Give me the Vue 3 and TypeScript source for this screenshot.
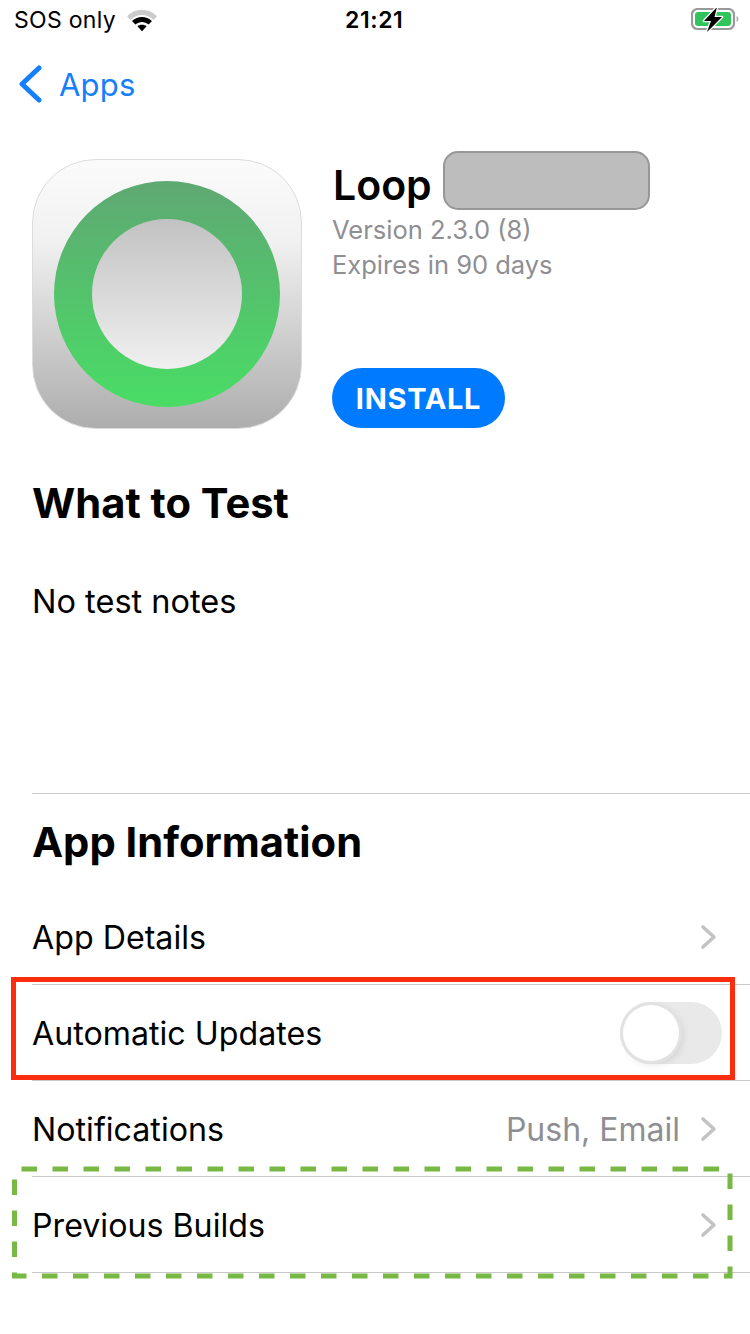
<script setup lang="ts">
interface Row {
  label: string
  value?: string
  toggle?: boolean
}
const rows: Row[] = [
  { label: 'App Details' },
  { label: 'Automatic Updates', toggle: true },
  { label: 'Notifications', value: 'Push, Email' },
  { label: 'Previous Builds' },
]
</script>

<template>
  <div class="page">
    <header class="status">
      <div class="status-left">
        <span class="sos">SOS only</span>
        <svg class="wifi" width="30" height="24" viewBox="0 0 30 24">
          <path d="M0 8.2C8.2 -0.4 21.8 -0.4 30 8.2L26.4 12C19.8 5.4 10.2 5.4 3.6 12Z" fill="#cbcbcb" />
          <path d="M5 13C10.8 7.8 19.2 7.8 25 13L21.6 16.6C17.6 13.2 12.4 13.2 8.4 16.6Z" fill="#000" />
          <path d="M10.4 18.2C13 16.2 17 16.2 19.6 18.2L15 23.2Z" fill="#000" />
        </svg>
      </div>
      <span class="time">21:21</span>
      <svg class="battery" width="48" height="24" viewBox="0 0 48 24">
        <rect x="1" y="1" width="42" height="20" rx="5.5" fill="none" stroke="#9a9a9a" stroke-width="2.2" />
        <rect x="4" y="4" width="36" height="14" rx="3" fill="#30c45a" />
        <path d="M45.5 8C47 8.6 47.5 9.6 47.5 11S47 13.4 45.5 14Z" fill="#b5b5b5" />
        <path d="M26 -1L13 13H20L16 24L31 9H23.5Z" fill="#000" stroke="#fff" stroke-width="2.6" stroke-linejoin="round" paint-order="stroke" />
      </svg>
    </header>

    <nav class="nav">
      <svg class="back" width="26" height="38" viewBox="0 0 26 38">
        <path d="M22 3L5 19L22 35" fill="none" stroke="#147efb" stroke-width="5" stroke-linecap="round" stroke-linejoin="round" />
      </svg>
      <span class="nav-label">Apps</span>
    </nav>

    <section class="hero">
      <div class="app-icon">
        <div class="ring">
          <div class="hole"></div>
        </div>
      </div>
      <div class="meta">
        <div class="name-line">
          <span class="name">Loop</span>
          <span class="redact"></span>
        </div>
        <div class="sub">Version 2.3.0 (8)</div>
        <div class="sub">Expires in 90 days</div>
        <button class="install" type="button">INSTALL</button>
      </div>
    </section>

    <h2 class="title test-title">What to Test</h2>
    <p class="notes">No test notes</p>

    <section class="info">
      <h2 class="title info-title">App Information</h2>
      <ul class="rows">
        <li v-for="row in rows" :key="row.label" class="row">
          <span class="label">{{ row.label }}</span>
          <span v-if="row.value" class="value">{{ row.value }}</span>
          <span v-if="row.toggle" class="toggle"><span class="knob"></span></span>
          <svg v-else class="chev" width="18" height="26" viewBox="0 0 18 26">
            <path d="M3 3L14 13L3 23" fill="none" stroke="#c3c3c6" stroke-width="3.6" stroke-linecap="round" stroke-linejoin="round" />
          </svg>
        </li>
      </ul>
    </section>

    <div class="mark-red"></div>
    <svg class="mark-green" width="726" height="116" viewBox="0 0 726 116">
      <rect x="4.5" y="4" width="715.5" height="107" fill="none" stroke="#77b944" stroke-width="5" stroke-dasharray="15.5 15.5" stroke-dashoffset="-7" />
    </svg>
  </div>
</template>

<style>
html,
body {
  margin: 0;
  background: #fff;
}
</style>

<style scoped>
.page {
  position: relative;
  width: 750px;
  height: 1334px;
  overflow: hidden;
  background: #fff;
  color: #000;
  font-family: Inter, "Liberation Sans", sans-serif;
}
.status {
  position: relative;
  display: flex;
  align-items: center;
  justify-content: space-between;
  height: 40px;
  padding: 0 11px 0 14px;
}
.status-left {
  display: flex;
  align-items: center;
  gap: 11px;
}
.sos {
  font-size: 23px;
  letter-spacing: 0.3px;
}
.wifi {
  display: block;
}
.time {
  position: absolute;
  left: 345px;
  font-size: 23px;
  font-weight: 600;
  letter-spacing: 0.6px;
}
.battery {
  display: block;
}
.nav {
  display: flex;
  align-items: center;
  height: 90px;
  padding: 0 0 2px 17px;
  box-sizing: border-box;
}
.back {
  display: block;
  margin-right: 16px;
}
.nav-label {
  color: #147efb;
  font-size: 31px;
  letter-spacing: 0.2px;
}
.hero {
  display: flex;
  height: 300px;
  padding: 29px 0 0 32px;
  box-sizing: border-box;
}
.app-icon {
  display: flex;
  align-items: center;
  justify-content: center;
  width: 270px;
  height: 270px;
  box-sizing: border-box;
  border-radius: 64px;
  border: 1px solid #dcdcdc;
  background: linear-gradient(#fbfbfb, #f1f1f1 30%, #adadad);
}
.ring {
  display: flex;
  align-items: center;
  justify-content: center;
  width: 226px;
  height: 226px;
  border-radius: 50%;
  background: linear-gradient(#5fa873, #49dd65);
}
.hole {
  width: 150px;
  height: 150px;
  border-radius: 50%;
  background: linear-gradient(#c2c2c2, #f0f0f0);
}
.meta {
  display: flex;
  flex-direction: column;
  margin-left: 30px;
}
.name-line {
  display: flex;
  align-items: flex-start;
  height: 61px;
  margin-top: -8px;
}
.name {
  font-size: 41px;
  font-weight: 600;
  line-height: 52px;
  margin: 8px 0 0 1px;
}
.redact {
  width: 207px;
  height: 59px;
  box-sizing: border-box;
  margin-left: 11px;
  border: 2px solid #979797;
  border-radius: 15px;
  background: #bdbdbd;
}
.sub {
  height: 35px;
  line-height: 35px;
  font-size: 25.5px;
  color: #8e8e93;
}
.install {
  width: 173px;
  height: 60px;
  margin-top: 86px;
  padding: 0;
  border: 0;
  border-radius: 30px;
  background: #007aff;
  color: #fff;
  font-family: inherit;
  font-size: 29px;
  font-weight: 700;
  letter-spacing: 0.7px;
}
.title {
  margin: 0;
  font-size: 41.7px;
  font-weight: 700;
  line-height: 50px;
}
.test-title {
  margin: 48px 0 0 32px;
}
.notes {
  margin: 0 0 0 32px;
  padding-top: 52px;
  height: 265px;
  box-sizing: border-box;
  font-size: 32.5px;
  line-height: 44px;
}
.info {
  margin-left: 32px;
  border-top: 1px solid #c8c8cc;
}
.info-title {
  margin: 23px 0 0;
}
.rows {
  list-style: none;
  margin: 22px 0 0;
  padding: 0;
}
.row {
  display: flex;
  align-items: center;
  height: 96px;
  box-sizing: border-box;
  padding: 1px 28px 0 0;
  border-bottom: 1px solid #c8c8cc;
}
.label {
  flex: 1;
  font-size: 32.2px;
}
.value {
  margin-right: 20px;
  color: #8e8e93;
  font-size: 32px;
}
.chev {
  display: block;
  margin-right: 4px;
}
.toggle {
  display: block;
  position: relative;
  width: 102px;
  height: 62px;
  border-radius: 31px;
  background: #e9e9ea;
}
.knob {
  position: absolute;
  left: 3px;
  top: 3px;
  width: 56px;
  height: 56px;
  border-radius: 50%;
  background: #fff;
  box-shadow: 0 0 0 3px #e2e2e2, 3px 3px 8px rgba(0, 0, 0, 0.12);
}
.mark-red {
  position: absolute;
  left: 11px;
  top: 977px;
  width: 724px;
  height: 103px;
  box-sizing: border-box;
  border: 5px solid #fb2d0e;
}
.mark-green {
  position: absolute;
  left: 10px;
  top: 1165px;
  display: block;
}
</style>
